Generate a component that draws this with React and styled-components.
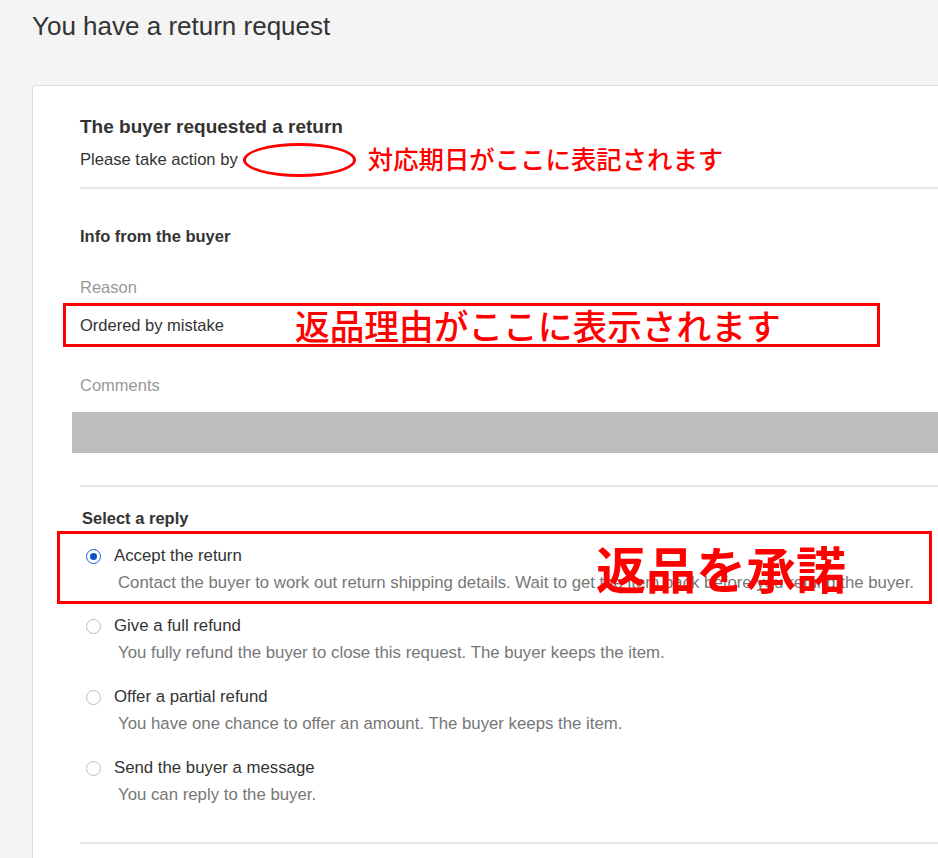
import styled, { createGlobalStyle } from "styled-components";

const GlobalStyle = createGlobalStyle`
  html, body {
    margin: 0;
    background: #f4f4f4;
    overflow: hidden;
  }
  body {
    font-family: "Liberation Sans", Arial, Helvetica, sans-serif;
    color: #333;
  }
`;

const Page = styled.div`
  padding: 11px 0 0 32px;
`;

const PageTitle = styled.h1`
  margin: 0;
  font-size: 26px;
  line-height: 30px;
  font-weight: 400;
  color: #333;
`;

const Card = styled.div`
  margin-top: 44px;
  width: 1000px;
  min-height: 900px;
  background: #fff;
  border: 1px solid #dcdcdc;
  border-radius: 3px;
  padding: 29px 0 0 47px;
  box-sizing: border-box;
`;

const Heading = styled.h2`
  margin: 0;
  font-size: 19px;
  line-height: 24px;
  font-weight: 700;
  color: #333;
`;

const ActionRow = styled.div`
  margin-top: 4px;
  display: flex;
  align-items: center;
  height: 34px;
  font-size: 16.6px;
  line-height: 20px;
`;

const DateMark = styled.span`
  margin-left: 5px;
  width: 113px;
  height: 34px;
  box-sizing: border-box;
  border: 3px solid #ff0000;
  border-radius: 50%;
`;

const Note = styled.span`
  color: #ff0000;
  font-family: "Noto Sans CJK JP", sans-serif;
  font-weight: ${(p) => p.$weight || 500};
  font-size: ${(p) => p.$size}px;
  line-height: 1;
  white-space: nowrap;
  margin-left: ${(p) => p.$gap || 0}px;
  margin-bottom: ${(p) => p.$lift || 0}px;
`;

const Divider = styled.hr`
  margin: ${(p) => p.$top}px 0 0;
  border: 0;
  border-top: 2px solid #e6e6e6;
  height: 0;
`;

const SubHeading = styled.h3`
  margin: ${(p) => p.$top}px 0 0 ${(p) => p.$left || 0}px;
  font-size: 16.5px;
  line-height: 20px;
  font-weight: 700;
  color: #333;
`;

const FieldLabel = styled.div`
  margin-top: ${(p) => p.$top}px;
  font-size: 16.5px;
  line-height: 20px;
  color: #999;
`;

const ReasonBox = styled.div`
  margin: 6px 0 0 -17px;
  width: 817px;
  height: 44px;
  box-sizing: border-box;
  border: 3px solid #ff0000;
  padding-left: 14px;
  display: flex;
  align-items: center;
  font-size: 16.5px;
  line-height: 20px;
  color: #333;
`;

const CommentBar = styled.div`
  margin: 17px 0 0 -8px;
  height: 41px;
  background: #bebebe;
`;

const ReplyList = styled.div`
  margin-top: 3.5px;
  padding-left: 2px;
  display: flex;
  flex-direction: column;
`;

const Option = styled.div`
  position: relative;
  padding: ${(p) => (p.$marked ? "12px 0 8px 26px" : "12px 0 12px 4px")};
  margin-left: ${(p) => (p.$marked ? "-25px" : "0")};
  width: ${(p) => (p.$marked ? "875px" : "auto")};
  box-sizing: border-box;
  border: ${(p) => (p.$marked ? "3px solid #ff0000" : "0")};
`;

const OptionLine = styled.label`
  display: flex;
  align-items: center;
  height: 20px;
  font-size: 16.8px;
  color: #333;
`;

const Radio = styled.span`
  width: 15px;
  height: 15px;
  box-sizing: border-box;
  border-radius: 50%;
  margin-right: 13px;
  flex: none;
  border: ${(p) => (p.$checked ? "1.5px solid #1b5fd8" : "1px solid #bdbdbd")};
  background: #fff;
  display: flex;
  align-items: center;
  justify-content: center;

  &::after {
    content: "";
    display: ${(p) => (p.$checked ? "block" : "none")};
    width: 7px;
    height: 7px;
    border-radius: 50%;
    background: #0e4fc4;
  }
`;

const OptionDesc = styled.div`
  margin: 7px 0 0 32px;
  font-size: 16.8px;
  line-height: 20px;
  color: #777;
  white-space: nowrap;
`;

const BigNote = styled(Note)`
  position: absolute;
  left: 536px;
  top: 8px;
  margin: 0;
`;

const replies = [
  {
    label: "Accept the return",
    desc: "Contact the buyer to work out return shipping details. Wait to get the item back before you refund the buyer.",
    checked: true,
  },
  {
    label: "Give a full refund",
    desc: "You fully refund the buyer to close this request. The buyer keeps the item.",
  },
  {
    label: "Offer a partial refund",
    desc: "You have one chance to offer an amount. The buyer keeps the item.",
  },
  {
    label: "Send the buyer a message",
    desc: "You can reply to the buyer.",
  },
];

const App = () => {
  return (
    <Page>
      <GlobalStyle />
      <PageTitle>You have a return request</PageTitle>
      <Card>
        <Heading>The buyer requested a return</Heading>
        <ActionRow>
          Please take action by
          <DateMark />
          <Note $size={25.4} $gap={12} $lift={3}>対応期日がここに表記されます</Note>
        </ActionRow>
        <Divider $top={10} />

        <SubHeading $top={37}>Info from the buyer</SubHeading>
        <FieldLabel $top={31}>Reason</FieldLabel>
        <ReasonBox>
          Ordered by mistake
          <Note $size={34.7} $gap={71}>返品理由がここに表示されます</Note>
        </ReasonBox>
        <FieldLabel $top={28}>Comments</FieldLabel>
        <CommentBar />
        <Divider $top={32} />

        <SubHeading $top={20.5} $left={2}>Select a reply</SubHeading>
        <ReplyList>
          {replies.map((r) => (
            <Option key={r.label} $marked={r.checked}>
              <OptionLine>
                <Radio $checked={r.checked} />
                {r.label}
              </OptionLine>
              <OptionDesc>{r.desc}</OptionDesc>
              {r.checked && (
                <BigNote $size={50} $weight={700}>返品を承諾</BigNote>
              )}
            </Option>
          ))}
        </ReplyList>
        <Divider $top={25} />
      </Card>
    </Page>
  );
};

export default App;
